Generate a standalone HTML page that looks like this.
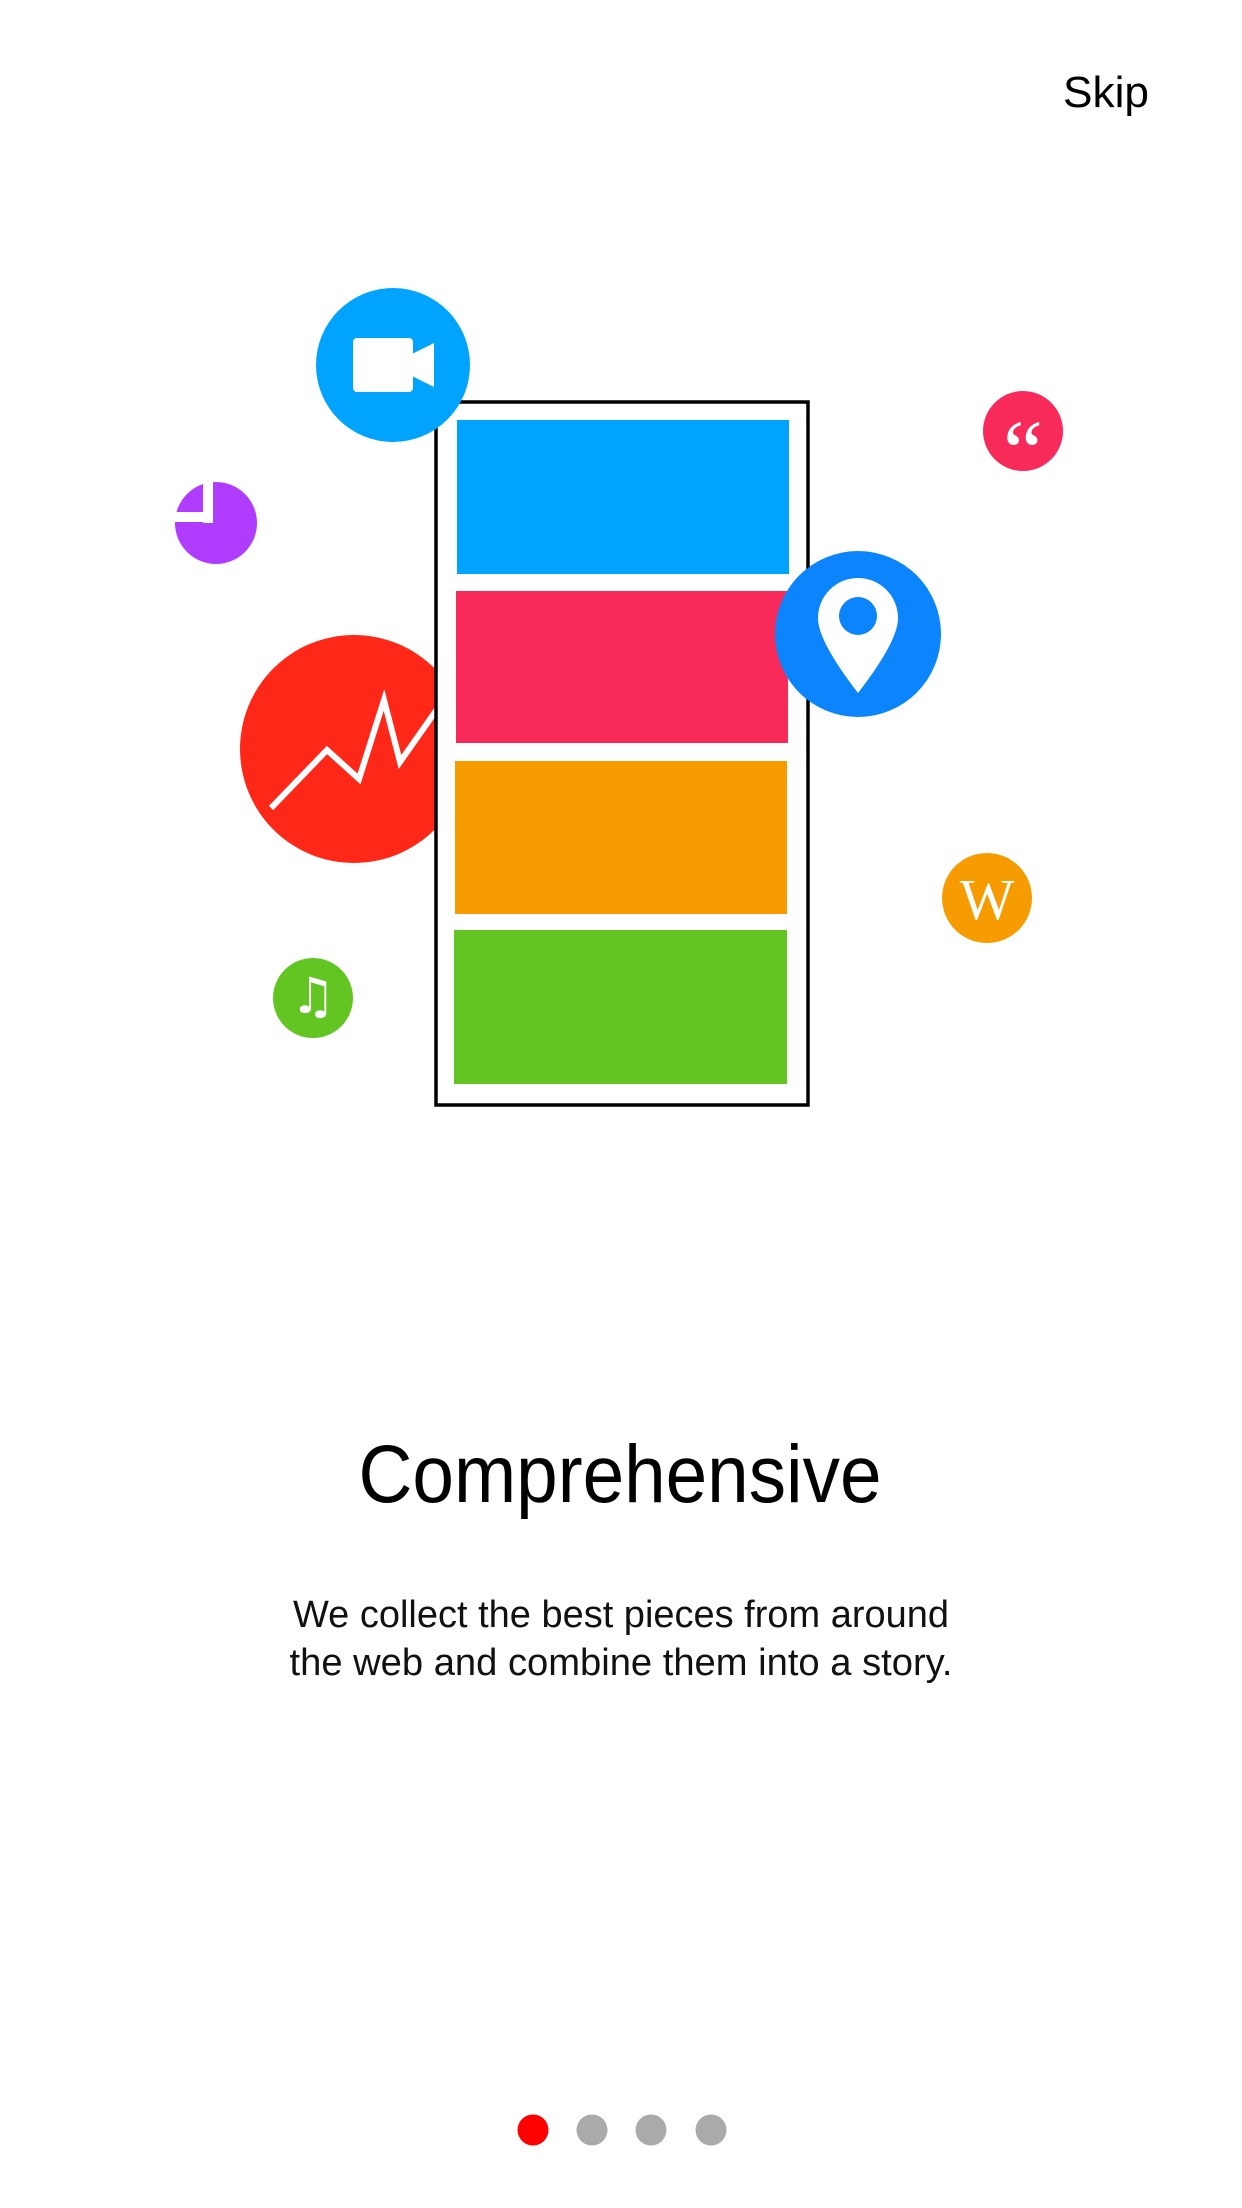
<!DOCTYPE html>
<html><head><meta charset="utf-8"><style>
html,body{margin:0;padding:0;background:#fff;}
svg{display:block;}
</style></head><body>
<svg width="1242" height="2208" viewBox="0 0 1242 2208" xmlns="http://www.w3.org/2000/svg">
<rect width="1242" height="2208" fill="#fff"/>
<text x="1063" y="107" font-family="Liberation Sans, Arial, sans-serif" font-size="44" fill="#000" textLength="86" lengthAdjust="spacingAndGlyphs">Skip</text>

<circle cx="354" cy="749" r="114" fill="#ff2717"/>
<polyline points="271,808 327,750 359,779 384,700 400,762 440,705" fill="none" stroke="#fff" stroke-width="6"/>

<rect x="436" y="402" width="372" height="703" fill="#fff" stroke="#000" stroke-width="3.5"/>
<rect x="457" y="420" width="332" height="154" fill="#00a4ff"/>
<rect x="456" y="591" width="332" height="152" fill="#f82a5a"/>
<rect x="455" y="761" width="332" height="153" fill="#f79c00"/>
<rect x="454" y="930" width="333" height="154" fill="#62c522"/>

<circle cx="393" cy="365" r="77" fill="#00a4ff"/>
<rect x="353" y="338" width="60" height="54" rx="4" fill="#fff"/>
<polygon points="412,354 434,343 434,387 412,376" fill="#fff"/>

<circle cx="1023" cy="431" r="40" fill="#f82a5a"/>
<text x="1023" y="482" text-anchor="middle" font-family="Liberation Serif, serif" font-size="90" fill="#fff">“</text>

<circle cx="216" cy="523" r="41" fill="#b03cff"/>
<rect x="203" y="480" width="10" height="43" fill="#fff"/>
<rect x="172" y="512" width="41" height="10" fill="#fff"/>
<path d="M203,512 L203,484 A40,40 0 0 0 178,512 Z" fill="#b03cff"/>

<circle cx="858" cy="634" r="83" fill="#0c84fb"/>
<path d="M858,693 C845,676 818,640 818,618 A40,40 0 0 1 898,618 C898,640 871,676 858,693 Z" fill="#fff"/>
<circle cx="858" cy="616" r="19" fill="#0c84fb"/>

<circle cx="987" cy="898" r="45" fill="#f79c00"/>
<text x="987" y="919" text-anchor="middle" font-family="Liberation Serif, serif" font-size="58" fill="#fff">W</text>

<circle cx="313" cy="998" r="40" fill="#62c522"/>
<text x="313" y="1013" text-anchor="middle" font-family="DejaVu Sans, sans-serif" font-size="50" fill="#fff">♫</text>

<text x="620" y="1502" text-anchor="middle" font-family="Liberation Sans, Arial, sans-serif" font-size="82" fill="#000" textLength="523" lengthAdjust="spacingAndGlyphs">Comprehensive</text>
<text x="621" y="1627" text-anchor="middle" font-family="Liberation Sans, Arial, sans-serif" font-size="38" fill="#111" textLength="656" lengthAdjust="spacingAndGlyphs">We collect the best pieces from around</text>
<text x="621" y="1675" text-anchor="middle" font-family="Liberation Sans, Arial, sans-serif" font-size="38" fill="#111" textLength="663" lengthAdjust="spacingAndGlyphs">the web and combine them into a story.</text>

<circle cx="533" cy="2130" r="15.5" fill="#ff0000"/>
<circle cx="592" cy="2130" r="15.5" fill="#aaaaaa"/>
<circle cx="651" cy="2130" r="15.5" fill="#aaaaaa"/>
<circle cx="711" cy="2130" r="15.5" fill="#aaaaaa"/>
</svg>
</body></html>
